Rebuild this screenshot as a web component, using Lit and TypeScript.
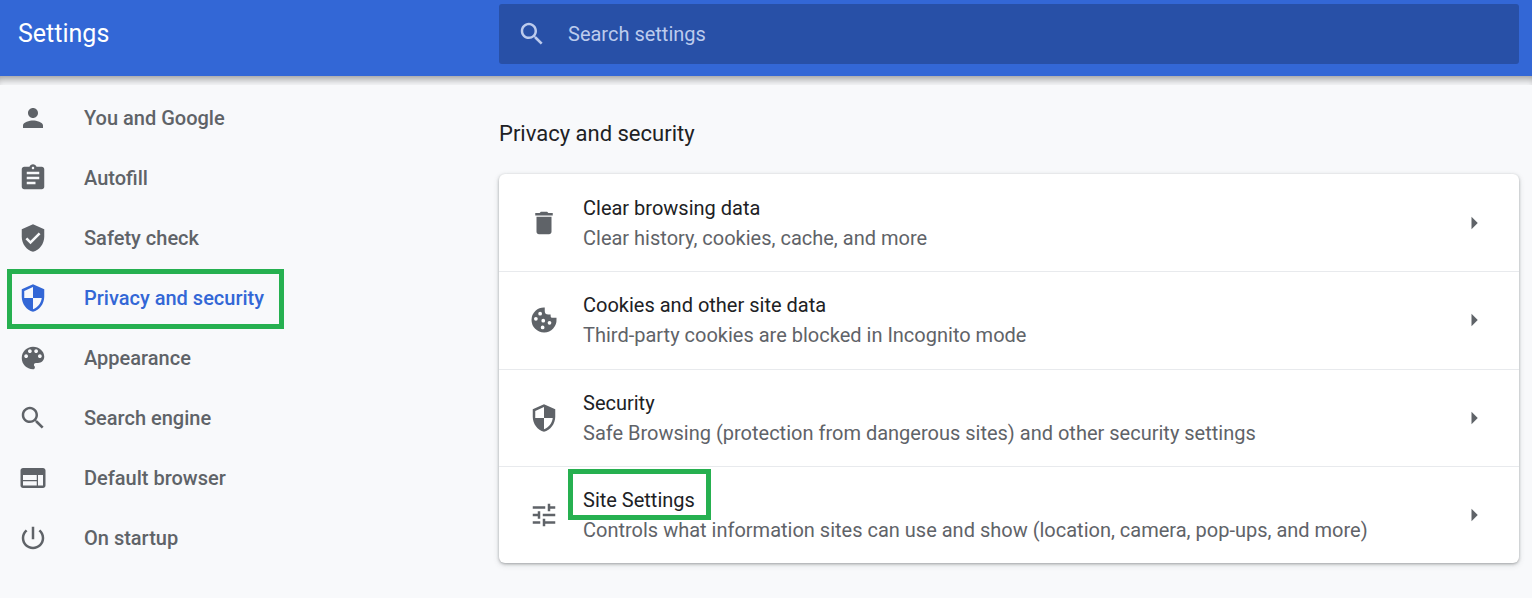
import { LitElement, html, css, svg, nothing } from "lit";
import { customElement, property } from "lit/decorators.js";

const icons = {
  person: svg`<path d="M12 12c2.21 0 4-1.79 4-4s-1.79-4-4-4-4 1.79-4 4 1.79 4 4 4zm0 2c-2.67 0-8 1.34-8 4v2h16v-2c0-2.66-5.33-4-8-4z"/>`,
  assignment: svg`<path d="M19 3h-4.18C14.4 1.84 13.3 1 12 1c-1.3 0-2.4.84-2.82 2H5c-1.1 0-2 .9-2 2v14c0 1.1.9 2 2 2h14c1.1 0 2-.9 2-2V5c0-1.1-.9-2-2-2zm-7 0c.55 0 1 .45 1 1s-.45 1-1 1-1-.45-1-1 .45-1 1-1zm2 14H7v-2h7v2zm3-4H7v-2h10v2zm0-4H7V7h10v2z"/>`,
  safety: svg`<path d="M12 1L3 5v6c0 5.55 3.84 10.74 9 12 5.16-1.26 9-6.45 9-12V5l-9-4zm-2 16l-4-4 1.41-1.41L10 14.17l6.59-6.59L18 9l-8 8z"/>`,
  security: svg`<path d="M12 1L3 5v6c0 5.55 3.84 10.74 9 12 5.16-1.26 9-6.45 9-12V5l-9-4zm0 10.99h7c-.53 4.12-3.28 7.79-7 8.94V12H5V6.3l7-3.11v8.8z"/>`,
  palette: svg`<path d="M12 3c-4.97 0-9 4.03-9 9s4.03 9 9 9c.83 0 1.5-.67 1.5-1.5 0-.39-.15-.74-.39-1.01-.23-.26-.38-.61-.38-.99 0-.83.67-1.5 1.5-1.5H16c2.76 0 5-2.24 5-5 0-4.42-4.03-8-9-8zm-5.5 9c-.83 0-1.5-.67-1.5-1.5S5.67 9 6.5 9 8 9.67 8 10.5 7.33 12 6.5 12zm3-4C8.67 8 8 7.33 8 6.5S8.67 5 9.5 5s1.5.67 1.5 1.5S10.33 8 9.5 8zm5 0c-.83 0-1.5-.67-1.5-1.5S13.67 5 14.5 5s1.5.67 1.5 1.5S15.33 8 14.5 8zm3 4c-.83 0-1.5-.67-1.5-1.5S16.67 9 17.5 9s1.5.67 1.5 1.5-.67 1.5-1.5 1.5z"/>`,
  search: svg`<path d="M15.5 14h-.79l-.28-.27C15.41 12.59 16 11.11 16 9.5 16 5.91 13.09 3 9.5 3S3 5.91 3 9.5 5.91 16 9.5 16c1.61 0 3.09-.59 4.23-1.57l.27.28v.79l5 4.99L20.49 19l-4.99-5zm-6 0C7.01 14 5 11.99 5 9.5S7.01 5 9.5 5 14 7.01 14 9.5 11.99 14 9.5 14z"/>`,
  browser: svg`<path d="M20 4H4c-1.1 0-1.99.9-1.99 2L2 18c0 1.1.9 2 2 2h16c1.1 0 2-.9 2-2V6c0-1.1-.9-2-2-2zm-5 14H4v-3.5h11V18zm0-4.5H4V9.500h11v4zm5 4.500h-4V9.500h4V18z"/>`,
  power: svg`<path d="M13 3h-2v10h2V3zm4.83 2.17l-1.42 1.42C17.99 7.86 19 9.81 19 12c0 3.87-3.13 7-7 7s-7-3.13-7-7c0-2.19 1.01-4.14 2.58-5.42L6.17 5.17C4.23 6.82 3 9.26 3 12c0 4.97 4.03 9 9 9s9-4.03 9-9c0-2.74-1.23-5.18-3.17-6.83z"/>`,
  trash: svg`<path d="M6 19c0 1.1.9 2 2 2h8c1.1 0 2-.9 2-2V7H6v12zM19 4h-3.500l-1-1h-5l-1 1H5v2h14V4z"/>`,
  cookie: svg`<path fill-rule="evenodd" d="M12.6 2A10 10 0 1 0 22 11.4V10.2h-3.4a1.3 1.3 0 0 1-1.3-1.3V7.600h-1.9a2.8 2.8 0 0 1-2.8-2.8zM8.9 5.400a1.5 1.5 0 1 1 0 3 1.500 1.500 0 0 1 0-3zM5.500 9.500a1.500 1.500 0 1 1 0 3 1.500 1.500 0 0 1 0-3zM11.400 11a1.500 1.500 0 1 1 0 3 1.500 1.500 0 0 1 0-3zM16.400 12.700a1.500 1.500 0 1 1 0 3 1.500 1.500 0 0 1 0-3zM10.900 16.400a1.500 1.500 0 1 1 0 3 1.500 1.500 0 0 1 0-3z"/>`,
  tune: svg`<path d="M3 17v2h6v-2H3zM3 5v2h10V5H3zm10 16v-2h8v-2h-8v-2h-2v6h2zM7 9v2H3v2h4v2h2V9H7zm14 4v-2H11v2h10zm-6-4h2V7h4V5h-4V3h-2v6z"/>`,
  arrow: svg`<path d="M10 7l5 5-5 5z"/>`,
};
type IconName = keyof typeof icons;

@customElement("settings-icon")
class SettingsIcon extends LitElement {
  @property() name: IconName = "person";
  static styles = css`
    :host { display: block; flex: none; width: 30px; height: 30px; }
    .glyph { display: block; width: 100%; height: 100%; fill: currentColor; }
  `;
  render() {
    return html`<svg class="glyph" viewBox="0 0 24 24" aria-hidden="true">${icons[this.name]}</svg>`;
  }
}

const sections: { icon: IconName; label: string; current?: boolean }[] = [
  { icon: "person", label: "You and Google" },
  { icon: "assignment", label: "Autofill" },
  { icon: "safety", label: "Safety check" },
  { icon: "security", label: "Privacy and security", current: true },
  { icon: "palette", label: "Appearance" },
  { icon: "search", label: "Search engine" },
  { icon: "browser", label: "Default browser" },
  { icon: "power", label: "On startup" },
];

const rows: { icon: IconName; title: string; detail: string; marked?: boolean }[] = [
  { icon: "trash", title: "Clear browsing data", detail: "Clear history, cookies, cache, and more" },
  { icon: "cookie", title: "Cookies and other site data", detail: "Third-party cookies are blocked in Incognito mode" },
  { icon: "security", title: "Security", detail: "Safe Browsing (protection from dangerous sites) and other security settings" },
  { icon: "tune", title: "Site Settings", detail: "Controls what information sites can use and show (location, camera, pop-ups, and more)", marked: true },
];

@customElement("app-root")
class AppRoot extends LitElement {
  static styles = css`
    :host {
      display: block;
      min-height: 100vh;
      background: #f8f9fb;
      color: #202124;
      font-family: Roboto, sans-serif;
      font-size: 20px;
      line-height: 30px;
    }
    * { box-sizing: border-box; }
    .toolbar {
      display: grid;
      grid-template-columns: 499px minmax(0, 1fr);
      padding: 4px 13px 12px 0;
      background: #3367d6;
    }
    .brand {
      margin: 0;
      padding-left: 18px;
      font-size: 25px;
      line-height: 60px;
      font-weight: 400;
      color: #fff;
    }
    .search {
      display: flex;
      align-items: center;
      gap: 21px;
      height: 60px;
      padding: 0 18px;
      border-radius: 3px;
      background: #2850a7;
      color: #bccbed;
    }
    .field {
      flex: 1;
      min-width: 0;
      padding: 0;
      border: 0;
      outline: 0;
      background: none;
      font: inherit;
      color: #fff;
    }
    .field::placeholder { color: #bccbed; opacity: 1; }
    .shade { height: 9px; box-shadow: inset 0 8px 9px -5px rgba(0, 0, 0, 0.4); }
    .body {
      display: grid;
      grid-template-columns: 499px minmax(0, 1fr);
      padding: 3px 13px 32px 0;
    }
    .menu { display: flex; flex-direction: column; align-items: flex-start; }
    .link {
      position: relative;
      display: flex;
      align-items: center;
      gap: 36px;
      height: 60px;
      padding: 0 20px 0 18px;
      font-weight: 500;
      color: #5f6368;
      text-decoration: none;
    }
    .link.current { color: #3367d6; }
    .link.current::after {
      content: "";
      position: absolute;
      inset: 1px 0 -1px 7px;
      border: 5px solid #26b050;
    }
    .heading {
      margin: 0;
      padding: 31px 0 25px;
      font-size: 22px;
      line-height: 30px;
      font-weight: 400;
    }
    .card {
      display: grid;
      grid-auto-rows: 1fr;
      min-height: 389px;
      border-radius: 6px;
      background: #fff;
      box-shadow: 0 1px 3px rgba(60, 64, 67, 0.4), 0 2px 6px rgba(60, 64, 67, 0.15);
    }
    .row {
      display: flex;
      align-items: center;
      gap: 24px;
      width: 100%;
      padding: 0 30px;
      border: 0;
      background: none;
      font: inherit;
      color: #5f6368;
      text-align: left;
      cursor: pointer;
    }
    .row + .row { border-top: 1px solid #e8eaed; }
    .copy { flex: 1; min-width: 0; }
    .title, .detail { display: block; }
    .title { color: #202124; }
    .mark { position: relative; }
    .mark::after {
      content: "";
      position: absolute;
      inset: -19px -16px -8px -15px;
      border: 5px solid #26b050;
    }
  `;

  render() {
    return html`
      <header class="toolbar">
        <h1 class="brand">Settings</h1>
        <label class="search">
          <settings-icon name="search"></settings-icon>
          <input class="field" type="search" placeholder="Search settings" aria-label="Search settings" />
        </label>
      </header>
      <div class="shade"></div>
      <div class="body">
        <nav class="menu" aria-label="Settings">
          ${sections.map(
            (s) => html`<a class="link ${s.current ? "current" : ""}" href="#" aria-current=${s.current ? "page" : nothing}>
              <settings-icon name=${s.icon}></settings-icon>
              <span>${s.label}</span>
            </a>`
          )}
        </nav>
        <main>
          <h2 class="heading">Privacy and security</h2>
          <div class="card">
            ${rows.map(
              (r) => html`<button class="row" type="button">
                <settings-icon name=${r.icon}></settings-icon>
                <span class="copy">
                  <span class="title"><span class=${r.marked ? "mark" : nothing}>${r.title}</span></span>
                  <span class="detail">${r.detail}</span>
                </span>
                <settings-icon name="arrow"></settings-icon>
              </button>`
            )}
          </div>
        </main>
      </div>
    `;
  }
}
